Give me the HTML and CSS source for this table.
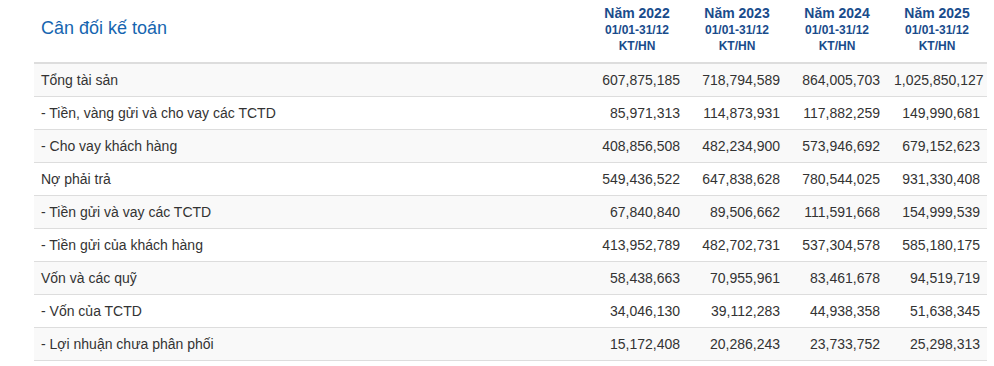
FILE: index.html
```html
<!DOCTYPE html>
<html lang="vi">
<head>
<meta charset="utf-8">
<link rel="stylesheet" href="styles.css">
</head>
<body>
<table class="bs">
  <colgroup>
    <col class="c-name">
    <col class="c-num"><col class="c-num"><col class="c-num"><col class="c-num">
  </colgroup>
  <thead>
    <tr>
      <th class="title">Cân đối kế toán</th>
      <th class="yr"><div class="y">Năm 2022</div><div class="s">01/01-31/12</div><div class="s">KT/HN</div></th>
      <th class="yr"><div class="y">Năm 2023</div><div class="s">01/01-31/12</div><div class="s">KT/HN</div></th>
      <th class="yr"><div class="y">Năm 2024</div><div class="s">01/01-31/12</div><div class="s">KT/HN</div></th>
      <th class="yr"><div class="y">Năm 2025</div><div class="s">01/01-31/12</div><div class="s">KT/HN</div></th>
    </tr>
  </thead>
  <tbody>
    <tr><td>Tổng tài sản</td><td>607,875,185</td><td>718,794,589</td><td>864,005,703</td><td>1,025,850,127</td></tr>
    <tr><td>- Tiền, vàng gửi và cho vay các TCTD</td><td>85,971,313</td><td>114,873,931</td><td>117,882,259</td><td>149,990,681</td></tr>
    <tr><td>- Cho vay khách hàng</td><td>408,856,508</td><td>482,234,900</td><td>573,946,692</td><td>679,152,623</td></tr>
    <tr><td>Nợ phải trả</td><td>549,436,522</td><td>647,838,628</td><td>780,544,025</td><td>931,330,408</td></tr>
    <tr><td>- Tiền gửi và vay các TCTD</td><td>67,840,840</td><td>89,506,662</td><td>111,591,668</td><td>154,999,539</td></tr>
    <tr><td>- Tiền gửi của khách hàng</td><td>413,952,789</td><td>482,702,731</td><td>537,304,578</td><td>585,180,175</td></tr>
    <tr><td>Vốn và các quỹ</td><td>58,438,663</td><td>70,955,961</td><td>83,461,678</td><td>94,519,719</td></tr>
    <tr><td>- Vốn của TCTD</td><td>34,046,130</td><td>39,112,283</td><td>44,938,358</td><td>51,638,345</td></tr>
    <tr><td>- Lợi nhuận chưa phân phối</td><td>15,172,408</td><td>20,286,243</td><td>23,733,752</td><td>25,298,313</td></tr>
  </tbody>
</table>
</body>
</html>
```
FILE: styles.css
```css
html, body {
  margin: 0;
  padding: 0;
  background: #fff;
}
body {
  padding: 0 7px 0 34px;
  font-family: "Liberation Sans", Arial, sans-serif;
  color: #333;
}
.bs {
  width: 953px;
  border-collapse: collapse;
  table-layout: fixed;
  font-size: 14px;
}
.c-name { width: 553px; }
.c-num { width: 100px; }
.bs thead th {
  border-bottom: 2px solid #ddd;
  padding: 0;
  height: 63px;
  box-sizing: border-box;
}
.bs th.title {
  text-align: left;
  font-weight: normal;
  font-size: 18px;
  color: #1665b0;
  padding: 0 0 6px 7px;
  vertical-align: middle;
}
.bs th.yr {
  text-align: center;
  vertical-align: top;
  color: #194c8c;
  font-weight: bold;
  padding-top: 4px;
}
.yr .y {
  font-size: 14px;
  line-height: 18px;
}
.yr .s {
  font-size: 12px;
  line-height: 16px;
}
.bs tbody td {
  height: 33px;
  padding: 0 7px;
  border-top: 1px solid #ddd;
  text-align: right;
  vertical-align: middle;
  box-sizing: border-box;
  white-space: nowrap;
}
.bs tbody tr:first-child td { border-top: 0; }
.bs tbody td:first-child { text-align: left; }
.bs tbody tr:nth-child(odd) { background: #f9f9f9; }
.bs tbody tr:last-child td { border-bottom: 1px solid #ddd; }
```
